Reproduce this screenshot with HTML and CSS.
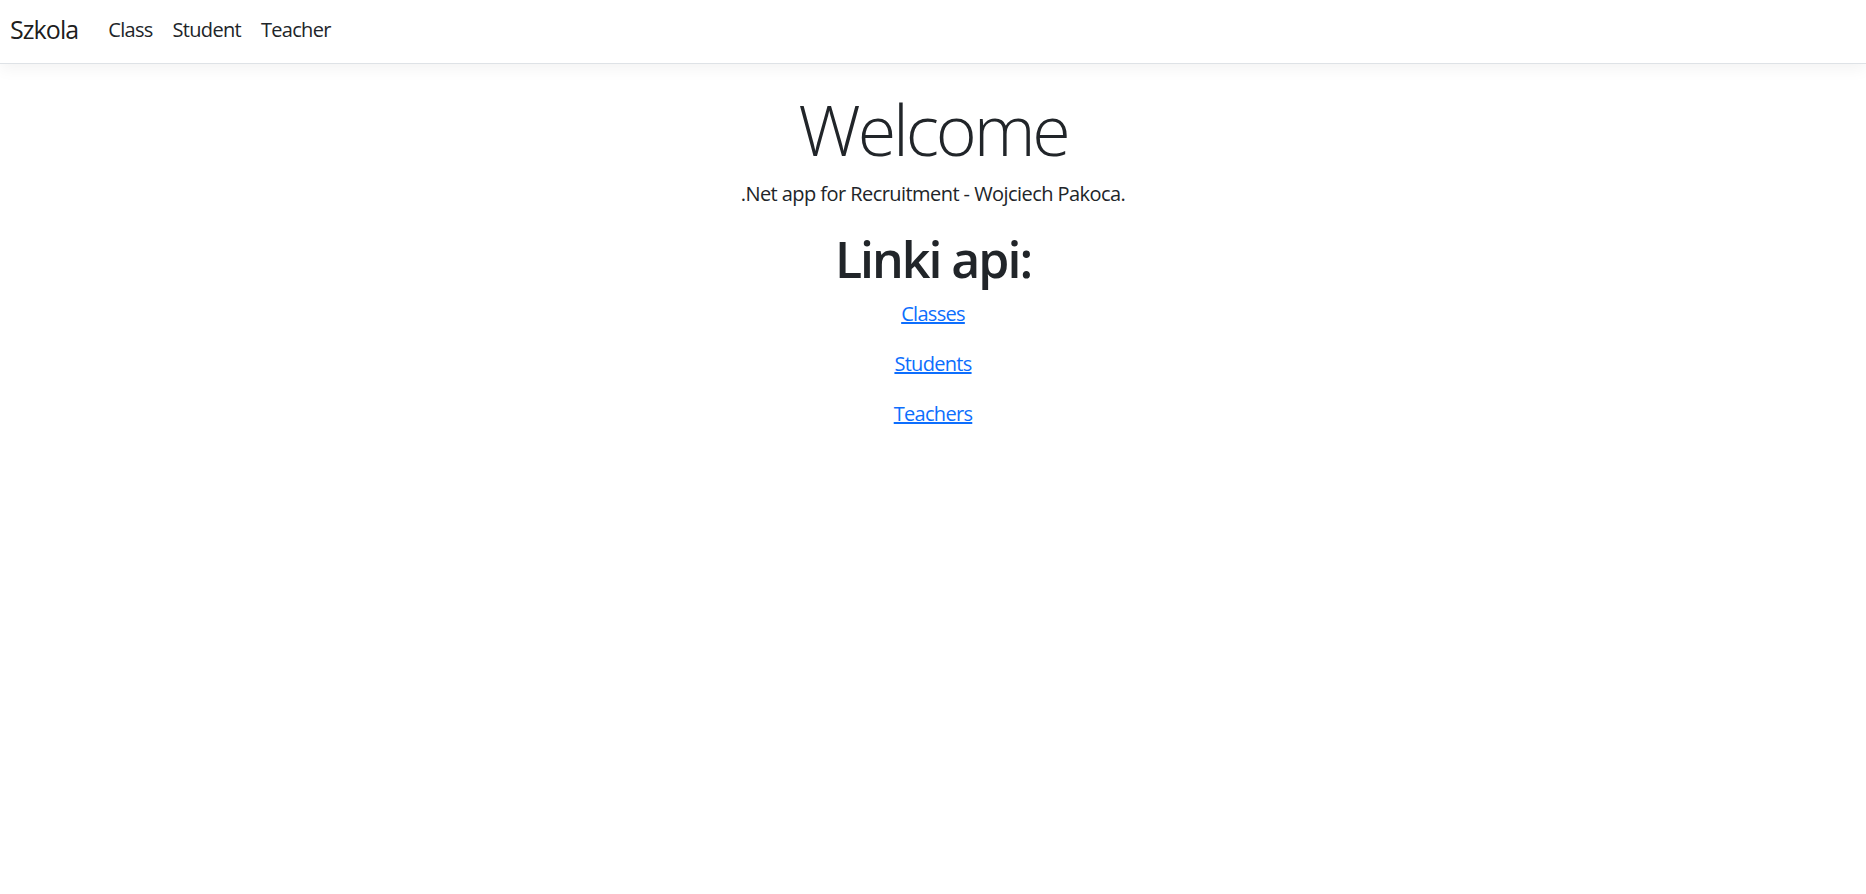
FILE: index.html
```html
<!DOCTYPE html>
<html lang="en">
<head>
<meta charset="utf-8">
<title>Home page - Szkola</title>
<link rel="stylesheet" href="styles.css">
</head>
<body>
<header>
  <nav class="navbar">
    <a class="brand" href="#">Szkola</a>
    <ul class="nav">
      <li><a class="nav-link" href="#">Class</a></li>
      <li><a class="nav-link" href="#">Student</a></li>
      <li><a class="nav-link" href="#">Teacher</a></li>
    </ul>
  </nav>
</header>
<main class="main">
  <div class="text-center">
    <h1 class="display">Welcome</h1>
    <p class="lead">.Net app for Recruitment - Wojciech Pakoca.</p>
    <h1 class="heading">Linki api:</h1>
    <p class="para"><a class="link" href="#">Classes</a></p>
    <p class="para"><a class="link" href="#">Students</a></p>
    <p class="para"><a class="link" href="#">Teachers</a></p>
  </div>
</main>
</body>
</html>
```
FILE: styles.css
```css
html, body {
  margin: 0;
  padding: 0;
  background: #fff;
}
body {
  font-family: "Open Sans", "Noto Sans", sans-serif;
  font-size: 20px;
  line-height: 1.5;
  color: #212529;
  letter-spacing: -0.035em;
}
.navbar {
  box-sizing: border-box;
  display: flex;
  align-items: center;
  height: 64px;
  padding: 0 0 3px 10px;
  border-bottom: 1px solid #dee2e6;
  box-shadow: 0 5px 15px rgba(0, 0, 0, 0.05);
  background: #fff;
  margin-bottom: 20px;
}
.brand {
  font-size: 25px;
  color: rgba(0, 0, 0, 0.9);
  text-decoration: none;
  margin-right: 20px;
  line-height: 1.5;
  letter-spacing: -0.037em;
}
.nav {
  display: flex;
  list-style: none;
  margin: 0;
  padding: 0;
}
.nav-link {
  display: block;
  padding: 10px;
  color: #212529;
  text-decoration: none;
  font-size: 20px;
}
.main {
  padding-bottom: 20px;
}
.text-center {
  text-align: center;
}
.display {
  font-size: 70px;
  font-weight: 300;
  line-height: 1.2;
  letter-spacing: -0.045em;
  margin: 0 0 10px;
  padding-top: 3px;
}
.lead {
  margin: -2px 0 20px;
  letter-spacing: -0.028em;
}
.heading {
  font-size: 50px;
  font-weight: 600;
  line-height: 1.2;
  letter-spacing: -0.04em;
  margin: 0 0 10px;
}
.para {
  margin: 0 0 20px;
}
.link {
  color: #0d6efd;
  text-decoration: underline;
}
```
